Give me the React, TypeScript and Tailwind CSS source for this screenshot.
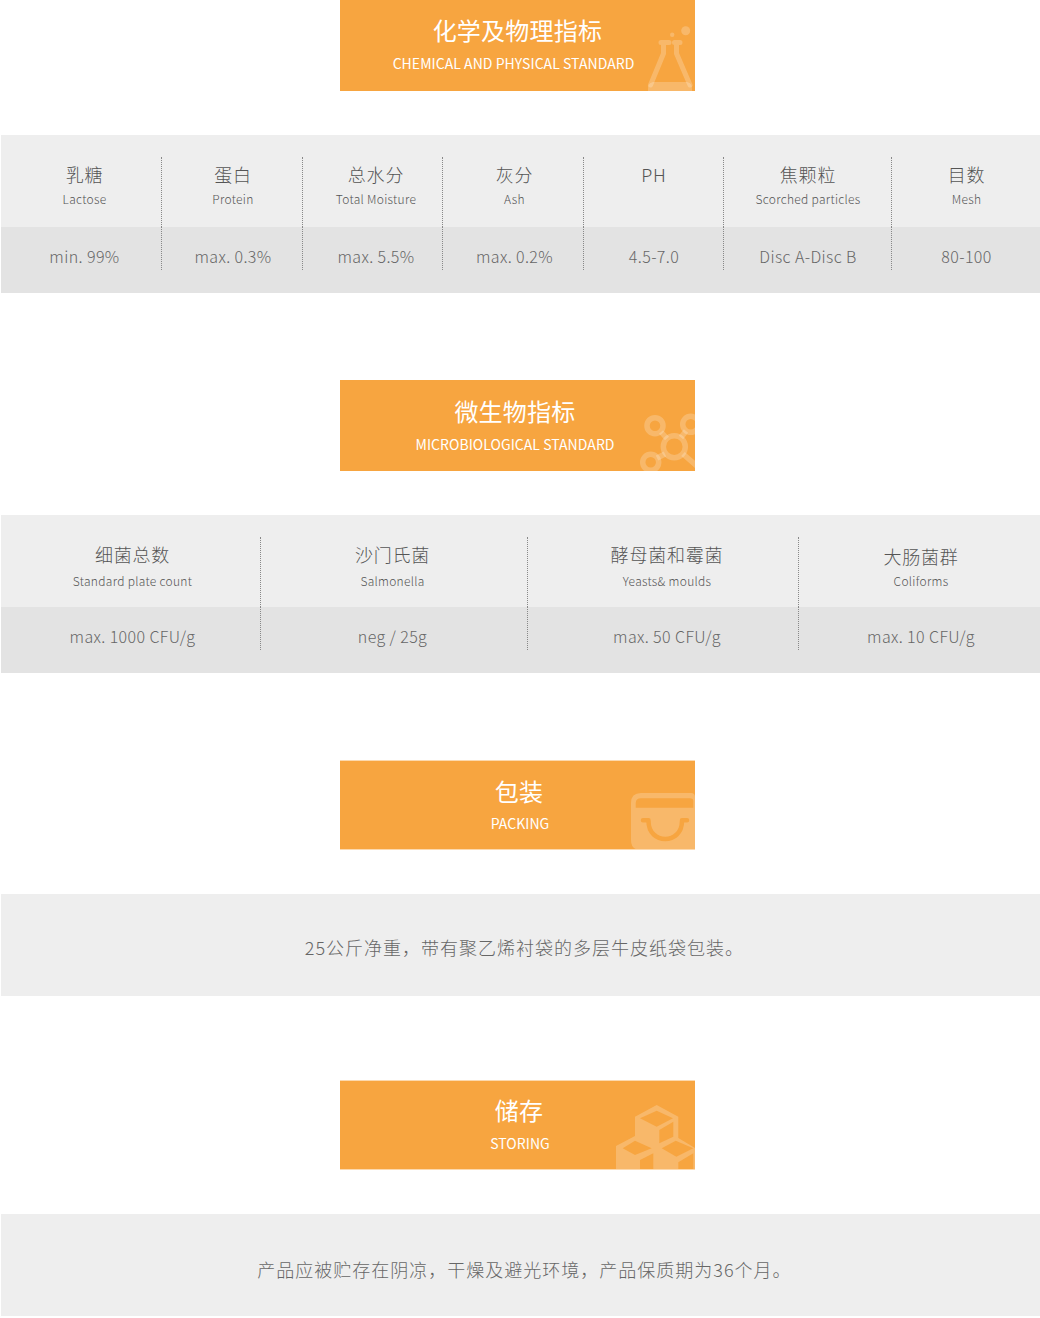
const font = { fontFamily: '"Noto Sans CJK SC", "Noto Sans", sans-serif' };

function Flask() {
  return (
    <svg className="absolute left-[307px] top-[25px]" width="48" height="66" viewBox="0 0 48 66" fill="none">
      <circle cx="38.700" cy="5.700" r="4.500" fill="#fff" fillOpacity=".22" />
      <circle cx="25.200" cy="9.700" r="2.200" fill="#fff" fillOpacity=".22" />
      <path d="M14 17.500H22M27.500 17.500H33M16.500 17.500V28.500L3.500 60M29.500 17.500V28.500L43 60" stroke="#fff" strokeOpacity=".22" strokeWidth="5" strokeLinecap="round" strokeLinejoin="round" />
      <path d="M6 57H40Q46 58 45 66H1Q0 58 6 57Z" fill="#fff" fillOpacity=".22" />
    </svg>
  );
}
function Molecule() {
  return (
    <svg className="absolute left-[298px] top-[32px]" width="80" height="70" viewBox="0 0 80 70" fill="none" stroke="#fff" strokeOpacity=".22" strokeWidth="5.500">
      <circle cx="17" cy="13.700" r="8" />
      <circle cx="36.300" cy="34.700" r="11" />
      <circle cx="52.700" cy="12.300" r="8" />
      <circle cx="12.700" cy="50.300" r="8" />
      <path d="M23 20L29 26.500M43 25.500L48 19M27 42L19 46M45 42L60 55" />
    </svg>
  );
}
function Bag() {
  return (
    <svg className="absolute left-[291px] top-[32px]" width="64" height="57" viewBox="0 0 64 57" fill="none">
      <path fillRule="evenodd" fill="#fff" fillOpacity=".22" d="M10 0H60Q64 0 64 4V57H10Q0 57 0 47V10Q0 0 10 0ZM10 5.300Q4.700 5.300 4.700 10V14.700H62.300V8Q62.300 5.300 59 5.300Z" />
      <path d="M12 27.200H17.500M51 27.200H56M17.500 28C17.500 52 51 52 51 28" stroke="#f7a540" strokeWidth="4.500" strokeLinecap="round" />
    </svg>
  );
}
function Cubes() {
  return (
    <svg className="absolute left-[276px] top-[24px]" width="79" height="65" viewBox="0 0 79 65" fill="none">
      <path fill="#fff" fillOpacity=".22" d="M40.700 0L62.300 11.700V33L79 43V65H0V41L19 31V11.700Z" />
      <g fill="#f7a540">
        <path d="M40.700 5.700L57 13.300L40.700 21.700L24 13.300Z" />
        <path d="M43.300 25L57.300 16.700V31.700L43.300 38.300Z" />
        <path d="M19 35.700L35.700 43.300L19 50L6.700 43.300Z" />
        <path d="M24 55L37.300 48.300V65H24Z" />
        <path d="M59.700 35.700L77.300 43.300L60.300 51.700L45.700 43.300Z" />
        <path d="M62.300 57.300L77.300 48.300V65H62.300Z" />
      </g>
    </svg>
  );
}

function Banner({ zh, en, h, zhTop, enTop, icon }: { zh: string; en: string; h: string; zhTop: string; enTop: string; icon: React.ReactNode }) {
  return (
    <div className={`relative ${h} ml-[340px] w-[355px] overflow-hidden bg-[#f7a540] text-white`}>
      <div className={`text-center text-[24px] leading-[32px] tracking-[0.25px] ${zhTop}`}>{zh}</div>
      <div className={`text-center text-[14px] leading-[20px] tracking-[0.05px] ${enTop}`}>{en}</div>
      {icon}
    </div>
  );
}

type Col = { zh: string; en?: string; val: string; w: string; pad: string; zhClass?: string };

function Table({ cols, mt, enGap }: { cols: Col[]; mt: string; enGap: string }) {
  return (
    <div className={`ml-px flex font-light ${mt}`}>
      {cols.map((c, i) => (
        <div key={c.zh} className={c.w}>
          <div className="h-[92px] bg-[#eeeeee] pt-[22px]">
            <div className={`h-[70px] border-dotted border-[#888888] text-center ${c.pad} ${i < cols.length - 1 ? 'border-r' : ''}`}>
              <div className={`text-[18px] leading-[34px] tracking-[0.8px] text-[#555555] ${c.zhClass ?? ''}`}>{c.zh}</div>
              {c.en && <div className={`text-[12px] leading-[16px] tracking-[0.3px] text-[#555555] ${enGap}`}>{c.en}</div>}
            </div>
          </div>
          <div className="h-[66px] bg-[#e3e3e3]">
            <div className={`h-[43px] border-dotted border-[#888888] pt-[13px] text-center text-[16px] leading-[32px] tracking-[0.4px] text-[#666666] ${c.pad} ${i < cols.length - 1 ? 'border-r' : ''}`}>
              {c.val}
            </div>
          </div>
        </div>
      ))}
    </div>
  );
}

function Band({ text, mt, tone }: { text: string; mt: string; tone: string }) {
  return (
    <div className={`ml-px flex h-[102px] items-center justify-center bg-[#eeeeee] pl-[8px] text-[18px] font-light tracking-[1px] text-[#666666] ${mt} ${tone}`}>{text}</div>
  );
}

export default function App() {
  return (
    <div className="h-[1318px] w-[1040px] overflow-hidden bg-white" style={font}>
      <Banner zh="化学及物理指标" en="CHEMICAL AND PHYSICAL STANDARD" h="h-[91px]" zhTop="pt-[14px]" enTop="mt-[7px] pr-[8px]" icon={<Flask />} />
      <Table
        mt="mt-[44px]"
        enGap=""
        cols={[
          { zh: '乳糖', en: 'Lactose', val: 'min. 99%', w: 'w-[161px]', pad: 'pl-[7px]' },
          { zh: '蛋白', en: 'Protein', val: 'max. 0.3%', w: 'w-[141px]', pad: 'pl-[2px]' },
          { zh: '总水分', en: 'Total Moisture', val: 'max. 5.5%', w: 'w-[140px]', pad: 'pl-[7px]' },
          { zh: '灰分', en: 'Ash', val: 'max. 0.2%', w: 'w-[141px]', pad: 'pl-[3px]' },
          { zh: 'PH', val: '4.5-7.0', w: 'w-[140px]', pad: 'pl-[1px]' },
          { zh: '焦颗粒', en: 'Scorched particles', val: 'Disc A-Disc B', w: 'w-[168px]', pad: 'pl-[1px]' },
          { zh: '目数', en: 'Mesh', val: '80-100', w: 'w-[148px]', pad: 'pl-[1px]' },
        ]}
      />
      <div className="mt-[87px]">
        <Banner zh="微生物指标" en="MICROBIOLOGICAL STANDARD" h="h-[91px]" zhTop="pt-[15px] pr-[5px]" enTop="mt-[7px] pr-[5px]" icon={<Molecule />} />
      </div>
      <Table
        mt="mt-[44px]"
        enGap="mt-[2px]"
        cols={[
          { zh: '细菌总数', en: 'Standard plate count', val: 'max. 1000 CFU/g', w: 'w-[260px]', pad: 'pl-[4px]' },
          { zh: '沙门氏菌', en: 'Salmonella', val: 'neg / 25g', w: 'w-[267px]', pad: 'pr-[3px]' },
          { zh: '酵母菌和霉菌', en: 'Yeasts& moulds', val: 'max. 50 CFU/g', w: 'w-[271px]', pad: 'pl-[8px]' },
          { zh: '大肠菌群', en: 'Coliforms', val: 'max. 10 CFU/g', w: 'w-[241px]', pad: 'pl-[3px]', zhClass: 'translate-y-[2px]' },
        ]}
      />
      <div className="mt-[87px]">
        <Banner zh="包装" en="PACKING" h="h-[90px] border-y border-[#fcd9ae]" zhTop="pt-[14px] pl-[3px]" enTop="mt-[6px] pl-[5px]" icon={<Bag />} />
      </div>
      <Band text="25公斤净重，带有聚乙烯衬袋的多层牛皮纸袋包装。" mt="mt-[44px]" tone="pt-[4px]" />
      <div className="mt-[84px]">
        <Banner zh="储存" en="STORING" h="h-[90px] border-y border-[#fcd9ae]" zhTop="pt-[13px] pl-[3px]" enTop="mt-[7px] pl-[5px]" icon={<Cubes />} />
      </div>
      <Band text="产品应被贮存在阴凉，干燥及避光环境，产品保质期为36个月。" mt="mt-[44px]" tone="pt-[8px]" />
    </div>
  );
}
